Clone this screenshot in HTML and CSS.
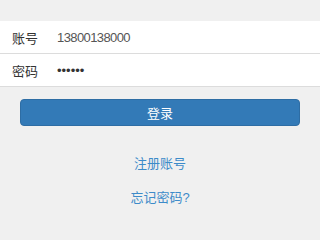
FILE: index.html
```html
<!DOCTYPE html>
<html lang="zh-CN">
<head>
<meta charset="utf-8">
<title>登录</title>
<link rel="stylesheet" href="styles.css">
</head>
<body>
<form class="login">
  <div class="group">
    <div class="row">
      <label class="label">账号</label>
      <input class="field" type="text" value="13800138000">
    </div>
    <div class="row">
      <label class="label">密码</label>
      <input class="field pwd" type="password" value="123456">
    </div>
  </div>
  <div class="actions">
    <button type="button" class="btn">登录</button>
  </div>
  <div class="links">
    <a class="link" href="#">注册账号</a>
    <a class="link" href="#">忘记密码?</a>
  </div>
</form>
</body>
</html>
```
FILE: styles.css
```css
html, body {
  margin: 0;
  padding: 0;
  background: #f0f0f0;
  font-family: "Liberation Sans", "Noto Sans CJK SC", sans-serif;
  font-size: 13px;
  color: #333;
}
.login {
  padding-top: 21px;
}
.group {
  background: #fff;
}
.row {
  display: flex;
  align-items: center;
  height: 32px;
  border-bottom: 1px solid #dcdcdc;
}
.label {
  flex: 0 0 57px;
  padding-left: 12px;
  box-sizing: border-box;
  color: #333;
  font-size: 13px;
}
.field {
  flex: 1;
  min-width: 0;
  border: 0;
  outline: 0;
  padding: 0;
  margin: 0;
  background: transparent;
  font-family: "Liberation Sans", "Noto Sans CJK SC", sans-serif;
  font-size: 13px;
  letter-spacing: -0.6px;
  color: #555;
}
.pwd {
  font-size: 13px;
  letter-spacing: 0;
  color: #333;
}
.actions {
  padding: 12px 20px 0;
}
.btn {
  display: block;
  width: 100%;
  height: 27px;
  border: 1px solid #2e6da4;
  border-radius: 4px;
  background: #337ab7;
  color: #fff;
  font-family: "Liberation Sans", "Noto Sans CJK SC", sans-serif;
  font-size: 13px;
  padding: 0;
}
.links {
  display: flex;
  flex-direction: column;
  align-items: center;
  gap: 14px;
  padding-top: 28px;
}
.link {
  line-height: 20px;
  color: #3d8bc9;
  text-decoration: none;
  font-size: 13px;
}
```
